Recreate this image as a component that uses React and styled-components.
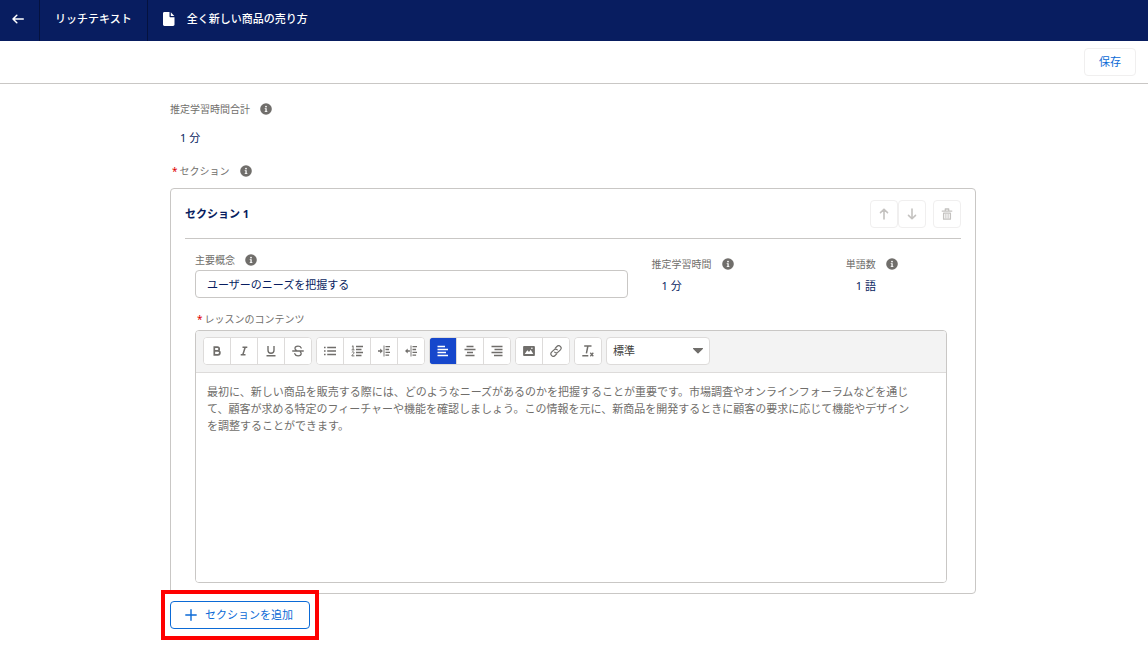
import React, { useState } from 'react';
import styled, { createGlobalStyle, css } from 'styled-components';

const colors = {
  navy: '#081d60',
  navyLine: '#05123f',
  link: '#0b6ad6',
  active: '#1647cc',
  text: '#706e6b',
  border: '#c9c7c5',
  softBorder: '#dddbda',
  faintBorder: '#f0efef',
  toolbar: '#f3f3f3',
};

const GlobalStyle = createGlobalStyle`
  * {
    box-sizing: border-box;
  }

  body {
    margin: 0;
    background: #fff;
    color: ${colors.navy};
    font-family: 'Noto Sans', 'Noto Sans CJK JP', sans-serif;
    font-size: 11px;
    line-height: 16px;
  }

  button, input, select, textarea {
    font: inherit;
    color: inherit;
    margin: 0;
  }

  button {
    padding: 0;
    cursor: pointer;
  }

  svg {
    display: block;
    flex: none;
  }
`;

const TopBar = styled.header`
  display: flex;
  height: 41px;
  background: ${colors.navy};
  color: #fff;
  font-weight: 500;
`;

const BackButton = styled.button`
  display: flex;
  align-items: center;
  justify-content: center;
  width: 40px;
  padding: 0 3px 4px 0;
  background: none;
  border: none;
  border-right: 1px solid ${colors.navyLine};
`;

const TopItem = styled.div`
  display: flex;
  align-items: center;
  gap: 12px;
  padding: 0 15px 4px;
  border-right: ${({ $last }) => ($last ? 'none' : `1px solid ${colors.navyLine}`)};
`;

const PageTitle = styled.h1`
  margin: 0;
  font-size: 11px;
  font-weight: 500;
`;

const ActionBar = styled.div`
  display: flex;
  align-items: center;
  justify-content: flex-end;
  height: 43px;
  padding: 0 12px;
  border-bottom: 1px solid ${colors.border};
`;

const SaveButton = styled.button`
  width: 52px;
  height: 28px;
  background: #fff;
  border: 1px solid ${colors.faintBorder};
  border-radius: 4px;
  color: ${colors.link};
`;

const Main = styled.main`
  padding: 17px 172px 24px 170px;
`;

const FieldLabel = styled.label`
  display: flex;
  align-items: center;
  gap: 10px;
  color: ${colors.text};
  font-size: 10px;
  line-height: 16px;
`;

const Required = styled.abbr`
  margin: 0 -8px 0 2px;
  color: #e00000;
  text-decoration: none;
`;

const Value = styled.output`
  display: block;
  padding: 0 10px;
`;

const Summary = styled.div`
  display: grid;
  gap: 13px;
  margin-bottom: 17px;
`;

const SectionCard = styled.section`
  margin-top: 9px;
  padding: 11px 14px 10px;
  border: 1px solid ${colors.border};
  border-radius: 4px;
`;

const SectionHeader = styled.div`
  display: flex;
  align-items: center;
  justify-content: space-between;
  padding-bottom: 10px;
  border-bottom: 1px solid ${colors.border};
`;

const SectionTitle = styled.h2`
  margin: 0;
  font-size: 11px;
  font-weight: 700;
`;

const SectionActions = styled.div`
  display: flex;
`;

const IconButton = styled.button`
  display: flex;
  align-items: center;
  justify-content: center;
  width: 28px;
  height: 28px;
  margin-left: ${({ $spaced }) => ($spaced ? '7px' : '0')};
  background: #fff;
  border: 1px solid ${colors.faintBorder};
  border-radius: 4px;
  color: #c4c2c0;
`;

const SectionBody = styled.div`
  padding: 13px 14px 0 10px;
`;

const DetailGrid = styled.div`
  display: grid;
  grid-template-columns: 432fr 170fr 101fr;
  column-gap: 24px;
  margin-bottom: 13px;
`;

const TextInput = styled.input`
  width: 100%;
  height: 28px;
  margin-top: 2px;
  padding: 0 11px;
  border: 1px solid ${colors.border};
  border-radius: 4px;
  background: #fff;

  &:focus {
    outline: none;
    border-color: ${colors.link};
  }
`;

const Metric = styled.div`
  display: grid;
  align-content: start;
  gap: 6px;
  padding-top: 4px;
`;

const Editor = styled.div`
  margin-top: 3px;
  border: 1px solid ${colors.border};
  border-radius: 4px;
  overflow: hidden;
`;

const Toolbar = styled.div`
  display: flex;
  flex-wrap: wrap;
  gap: 4px;
  padding: 6px 7px 7px;
  background: ${colors.toolbar};
  border-bottom: 1px solid ${colors.softBorder};
`;

const ToolGroup = styled.div`
  display: flex;
  border: 1px solid ${colors.softBorder};
  border-radius: 4px;
  background: #fff;
  overflow: hidden;
`;

const ToolButton = styled.button`
  display: flex;
  align-items: center;
  justify-content: center;
  width: 27px;
  height: 26px;
  background: #fff;
  border: none;
  color: ${colors.text};

  & + & {
    border-left: 1px solid ${colors.softBorder};
  }

  &:first-child {
    width: 26px;
  }

  ${({ $active }) =>
    $active &&
    css`
      background: ${colors.active};
      color: #fff;
      box-shadow: 0 0 0 1px ${colors.active};
    `}
`;

const SelectWrap = styled.div`
  display: grid;
  align-items: center;
  width: 104px;
  height: 28px;

  > * {
    grid-area: 1 / 1;
  }

  svg {
    justify-self: end;
    margin-right: 7px;
    color: ${colors.text};
    pointer-events: none;
  }
`;

const FormatSelect = styled.select`
  appearance: none;
  width: 100%;
  height: 28px;
  padding: 0 24px 0 6px;
  background: #fff;
  border: 1px solid ${colors.softBorder};
  border-radius: 4px;
  color: #3e3e3c;
`;

const Content = styled.textarea`
  display: block;
  width: 100%;
  height: 209px;
  padding: 10px 26px 10px 11px;
  border: none;
  outline: none;
  resize: none;
  color: ${colors.text};
  line-height: 17px;
`;

const AddSection = styled.div`
  position: relative;
  width: fit-content;
  margin-top: 7px;
`;

const AddButton = styled.button`
  display: flex;
  align-items: center;
  gap: 8px;
  width: 140px;
  height: 28px;
  padding: 0 14px;
  background: #fff;
  border: 1px solid ${colors.link};
  border-radius: 4px;
  color: ${colors.link};
`;

// Callout frame drawn over the button and the card edge
const Highlight = styled.div`
  position: absolute;
  inset: -11px -9px;
  border: 4px solid #ff0000;
  pointer-events: none;
`;

const Icon = ({ size = 12, children, ...rest }) => (
  <svg
    width={size}
    height={size}
    viewBox="0 0 12 12"
    fill="none"
    stroke="currentColor"
    strokeWidth="1.3"
    aria-hidden="true"
    {...rest}
  >
    {children}
  </svg>
);

const InfoIcon = () => (
  <Icon stroke="none">
    <circle cx="6" cy="6" r="5.8" fill={colors.text} />
    <circle cx="6" cy="3.6" r="0.9" fill="#fff" />
    <path d="M4.7 5.2h2v3h.7v.8H4.7v-.8h.7V6h-.7z" fill="#fff" />
  </Icon>
);

const icons = {
  bold: (
    <Icon strokeWidth="1.7">
      <path d="M3.3 2.2h3.1a1.8 1.8 0 0 1 0 3.6H3.3zM3.3 5.8h3.6a2 2 0 0 1 0 4H3.3z" />
    </Icon>
  ),
  italic: (
    <Icon strokeWidth="1.5">
      <path d="M4.5 2.2h4.8M2.7 9.8h4.800M7.200 2.200L4.800 9.800" />
    </Icon>
  ),
  underline: (
    <Icon strokeWidth="1.4">
      <path d="M3 1v4.3a3 3 0 0 0 6 0V1M1.5 10.8h9" />
    </Icon>
  ),
  strike: (
    <Icon strokeLinecap="round">
      <path d="M9.2 3C8.7 1.7 7.5 1.2 6 1.2c-1.8 0-3 .9-3 2.2 0 1 .6 1.5 1.5 1.9M.7 6h10.6M8.4 7c.5.4.8.9.8 1.5 0 1.3-1.2 2.3-3.1 2.3-1.800 0-2.900-.8-3.300-2.100" />
    </Icon>
  ),
  bullets: (
    <Icon>
      <path d="M0 2.500h1.600M3.200 2.500H12M0 6h1.600M3.200 6H12M0 9.500h1.600M3.200 9.500H12" />
    </Icon>
  ),
  numbers: (
    <Icon>
      <path d="M5 1.500h7M5 4.500h5.500M5 7.500h7M5 10.500h5.500" />
      <path d="M.9 1.500l1.200-.7v4M.6 4.900h2.900M.8 7.400c.6-.9 2.300-.7 2.200.3C3 8.700 1.300 9.500.8 10.900h2.600" strokeWidth="1" />
    </Icon>
  ),
  indent: (
    <Icon>
      <path d="M6 .5v11" strokeWidth="0.9" />
      <path d="M7.500 1.700H12M7.500 4.500h3.600M7.500 7.300H12M7.500 10.100h3.600M0 6h3" />
      <path d="M2.200 3.600L4.900 6 2.200 8.400z" fill="currentColor" stroke="none" />
    </Icon>
  ),
  outdent: (
    <Icon>
      <path d="M6 .5v11" strokeWidth="0.9" />
      <path d="M7.500 1.700H12M7.500 4.500h3.600M7.500 7.300H12M7.500 10.100h3.600M1.900 6h3" />
      <path d="M2.700 3.600L0 6l2.700 2.400z" fill="currentColor" stroke="none" />
    </Icon>
  ),
  left: (
    <Icon strokeWidth="1.4">
      <path d="M.5 1.500h7.500M.5 4.500h10.500M.5 7.500h8.500M.5 10.500h10.500" />
    </Icon>
  ),
  center: (
    <Icon strokeWidth="1.4">
      <path d="M2.500 1.500h7M.5 4.500h11M3 7.500h6M1.500 10.500h9" />
    </Icon>
  ),
  right: (
    <Icon strokeWidth="1.4">
      <path d="M.5 1.500h11M3.500 4.500h8M.5 7.500h11M3 10.500h8.500" />
    </Icon>
  ),
  image: (
    <Icon stroke="none">
      <path
        fillRule="evenodd"
        fill="currentColor"
        d="M1 1h10a.9.9 0 0 1 .9.900v8.200a.9.9 0 0 1-.9.900H1a.9.9 0 0 1-.9-.9V1.900A.9.9 0 0 1 1 1zM1.700 9h8.600L7.700 4.700 6 7 4.300 5.200zM8.900 2.500a.8.8 0 1 0 0 1.600.8.8 0 0 0 0-1.600z"
      />
    </Icon>
  ),
  link: (
    <Icon strokeLinecap="round" strokeWidth="1.2">
      <path d="M5.300 3.200l1.600-1.700a2.300 2.300 0 0 1 3.500 3.300L8 7.200a2.300 2.300 0 0 1-3.300 0" />
      <path d="M6.700 8.800l-1.600 1.700a2.300 2.300 0 0 1-3.500-3.300L4 4.800a2.300 2.300 0 0 1 3.300 0" />
    </Icon>
  ),
  clear: (
    <Icon>
      <path d="M2.200 1h7.300M5.900 1L4.400 8.300M.3 10.800h6" strokeWidth="1.5" />
      <path d="M8.300 7.800l3 3.400M11.300 7.800l-3 3.400" />
    </Icon>
  ),
};

const toolGroups = [
  [
    { id: 'bold', label: '太字' },
    { id: 'italic', label: '斜体' },
    { id: 'underline', label: '下線' },
    { id: 'strike', label: '取り消し線' },
  ],
  [
    { id: 'bullets', label: '箇条書き' },
    { id: 'numbers', label: '番号付きリスト' },
    { id: 'indent', label: 'インデント' },
    { id: 'outdent', label: 'インデント解除' },
  ],
  [
    { id: 'left', label: '左揃え' },
    { id: 'center', label: '中央揃え' },
    { id: 'right', label: '右揃え' },
  ],
  [
    { id: 'image', label: '画像' },
    { id: 'link', label: 'リンク' },
  ],
  [{ id: 'clear', label: '書式をクリア' }],
];

const alignments = ['left', 'center', 'right'];

const App = () => {
  const [concept, setConcept] = useState('ユーザーのニーズを把握する');
  const [align, setAlign] = useState('left');
  const [content, setContent] = useState(
    '最初に、新しい商品を販売する際には、どのようなニーズがあるのかを把握することが重要です。市場調査やオンラインフォーラムなどを通じて、顧客が求める特定のフィーチャーや機能を確認しましょう。この情報を元に、新商品を開発するときに顧客の要求に応じて機能やデザインを調整することができます。'
  );

  const handleTool = (id) => {
    if (alignments.includes(id)) {
      setAlign(id);
    }
  };

  return (
    <>
      <GlobalStyle />
      <TopBar>
        <BackButton aria-label="戻る">
          <Icon strokeLinecap="round" strokeLinejoin="round" strokeWidth="1.5">
            <path d="M11.300 6H1M4.800 2.300L1 6l3.800 3.700" />
          </Icon>
        </BackButton>
        <TopItem>リッチテキスト</TopItem>
        <TopItem $last>
          <svg width="12" height="14" viewBox="0 0 12 14" fill="currentColor" aria-hidden="true">
            <path d="M1.400 0H6.500v4.200c0 .6.400 1 1 1h4v7.400c0 .8-.6 1.400-1.400 1.400H1.400C.6 14 0 13.400 0 12.600V1.400C0 .6.600 0 1.400 0z" />
            <path d="M7.800.300l3.500 3.600H7.800z" />
          </svg>
          <PageTitle>全く新しい商品の売り方</PageTitle>
        </TopItem>
      </TopBar>

      <ActionBar>
        <SaveButton>保存</SaveButton>
      </ActionBar>

      <Main>
        <Summary>
          <FieldLabel htmlFor="total-time">
            推定学習時間合計 <InfoIcon />
          </FieldLabel>
          <Value id="total-time">1 分</Value>
        </Summary>

        <FieldLabel as="div">
          <Required>*</Required>
          セクション <InfoIcon />
        </FieldLabel>

        <SectionCard>
          <SectionHeader>
            <SectionTitle>セクション 1</SectionTitle>
            <SectionActions>
              <IconButton aria-label="上へ移動">
                <Icon strokeLinecap="round" strokeLinejoin="round" strokeWidth="1.6">
                  <path d="M6 11V1.200M2.500 4.600L6 1.200l3.500 3.400" />
                </Icon>
              </IconButton>
              <IconButton aria-label="下へ移動">
                <Icon strokeLinecap="round" strokeLinejoin="round" strokeWidth="1.6">
                  <path d="M6 1v9.800M2.500 7.400L6 10.800l3.500-3.400" />
                </Icon>
              </IconButton>
              <IconButton aria-label="削除" $spaced>
                <Icon strokeLinecap="round" strokeLinejoin="round">
                  <path d="M1.200 3.100h9.600M4.300 2.900V1h3.400v1.900" />
                  <path d="M2.600 5.200v6h6.800v-6z" />
                  <path d="M4.900 6.200v4M7.100 6.200v4" strokeWidth="1" />
                </Icon>
              </IconButton>
            </SectionActions>
          </SectionHeader>

          <SectionBody>
            <DetailGrid>
              <div>
                <FieldLabel htmlFor="concept">
                  主要概念 <InfoIcon />
                </FieldLabel>
                <TextInput id="concept" value={concept} onChange={(e) => setConcept(e.target.value)} />
              </div>
              <Metric>
                <FieldLabel htmlFor="section-time">
                  推定学習時間 <InfoIcon />
                </FieldLabel>
                <Value id="section-time">1 分</Value>
              </Metric>
              <Metric>
                <FieldLabel htmlFor="word-count">
                  単語数 <InfoIcon />
                </FieldLabel>
                <Value id="word-count">1 語</Value>
              </Metric>
            </DetailGrid>

            <FieldLabel htmlFor="lesson-content">
              <Required>*</Required>
              レッスンのコンテンツ
            </FieldLabel>
            <Editor>
              <Toolbar>
                {toolGroups.map((group) => (
                  <ToolGroup key={group[0].id}>
                    {group.map(({ id, label }) => (
                      <ToolButton
                        key={id}
                        aria-label={label}
                        $active={id === align}
                        onClick={() => handleTool(id)}
                      >
                        {icons[id]}
                      </ToolButton>
                    ))}
                  </ToolGroup>
                ))}
                <SelectWrap>
                  <FormatSelect aria-label="スタイル" defaultValue="normal">
                    <option value="normal">標準</option>
                  </FormatSelect>
                  <svg width="10" height="6" viewBox="0 0 10 6" fill="currentColor" aria-hidden="true">
                    <path d="M.6 0h8.800a.5.5 0 0 1 .4.900L5.500 5.300a.7.7 0 0 1-1 0L.2.900A.5.500 0 0 1 .6 0z" />
                  </svg>
                </SelectWrap>
              </Toolbar>
              <Content
                id="lesson-content"
                value={content}
                onChange={(e) => setContent(e.target.value)}
              />
            </Editor>
          </SectionBody>
        </SectionCard>

        <AddSection>
          <AddButton>
            <Icon strokeLinecap="round" strokeWidth="1.4">
              <path d="M6 .8v10.400M.8 6h10.400" />
            </Icon>
            セクションを追加
          </AddButton>
          <Highlight />
        </AddSection>
      </Main>
    </>
  );
};

export default App;
